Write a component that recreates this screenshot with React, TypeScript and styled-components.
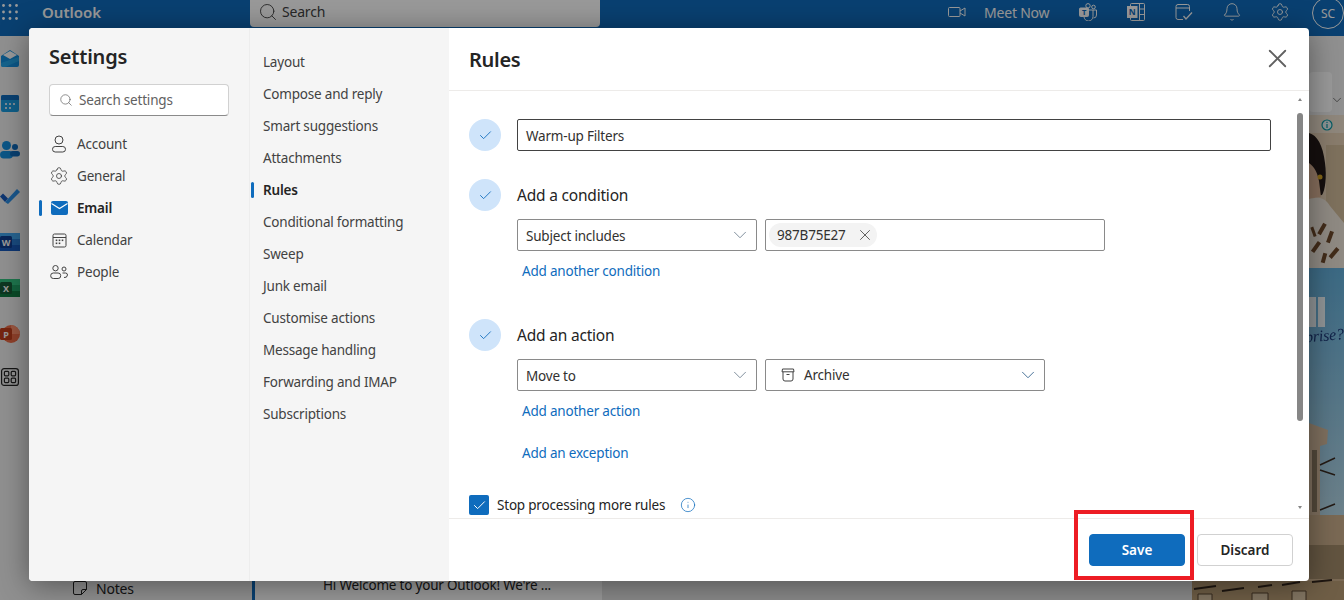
import React from 'react'
import styled, { createGlobalStyle } from 'styled-components'
import { Bell, Check, ChevronDown, Info, Search, Settings as Gear, X } from 'lucide-react'

const FONT = `'Noto Sans', 'Open Sans', Arial, sans-serif`

const GlobalStyle = createGlobalStyle`
  html, body {
    margin: 0;
    height: 100%;
    overflow: hidden;
  }
  body {
    font-family: ${FONT};
    font-size: 13.5px;
    letter-spacing: -0.2px;
    color: #242424;
  }
  * {
    box-sizing: border-box;
  }
`

const Page = styled.div`
  position: relative;
  width: 1344px;
  height: 600px;
  overflow: hidden;
  display: flex;
  flex-direction: column;
  background: #f0f0f0;
`

const TopBar = styled.header`
  height: 36px;
  flex: none;
  display: flex;
  align-items: flex-start;
  background: #0f6cbd;
  color: #fff;
`

const Waffle = styled.div`
  width: 42px;
  height: 24px;
  padding-left: 2px;
  display: flex;
  align-items: center;
`

const Brand = styled.div`
  width: 208px;
  height: 24px;
  line-height: 24px;
  font-size: 15px;
  font-weight: 600;
  letter-spacing: 0;
`

const TopSearch = styled.div`
  width: 350px;
  height: 27px;
  padding: 0 0 3px 8px;
  display: flex;
  align-items: center;
  gap: 4px;
  background: #fff;
  border-radius: 0 0 4px 4px;
  color: #424242;
  font-size: 14px;
  line-height: 24px;
`

const TopActions = styled.div`
  margin-left: auto;
  display: flex;
  align-items: flex-start;
`

const MeetNow = styled.div`
  width: 116px;
  height: 24px;
  display: flex;
  align-items: center;
  gap: 18px;
  font-size: 14px;
`

const TopIcon = styled.div`
  width: 48px;
  height: 24px;
  display: flex;
  align-items: center;
  justify-content: center;
`

const Avatar = styled.div`
  width: 32px;
  height: 32px;
  margin: -3px 0 0 8px;
  border: 1px solid #fff;
  border-radius: 50%;
  display: flex;
  align-items: center;
  justify-content: center;
  font-size: 12px;
`

const Workspace = styled.div`
  flex: 1;
  min-height: 0;
  display: flex;
`

const Rail = styled.nav`
  width: 48px;
  flex: none;
  padding-top: 10px;
  display: flex;
  flex-direction: column;
  gap: 22px;
`

const RailIcon = styled.div`
  width: 24px;
  height: 24px;
  display: flex;
  align-items: center;
  justify-content: center;
  margin-left: -2px;
  &:last-child {
    margin-top: -3px;
  }
`

const FolderPane = styled.div`
  width: 204px;
  flex: none;
  padding: 0 0 1px 25px;
  display: flex;
  flex-direction: column;
  justify-content: flex-end;
`

const NotesRow = styled.div`
  height: 22px;
  display: flex;
  align-items: center;
  gap: 9px;
  font-size: 14px;
`

const MailList = styled.div`
  width: 350px;
  flex: none;
  background: #fff;
  border-left: 3px solid #0f6cbd;
  padding: 0 0 5px 68px;
  display: flex;
  flex-direction: column;
  justify-content: flex-end;
  font-size: 13.5px;
  line-height: 20px;
  white-space: nowrap;
`

const ReadingPane = styled.div`
  width: 590px;
  flex: none;
  background: #e6e6e6;
`

const AdColumn = styled.aside`
  flex: 1;
  display: flex;
  flex-direction: column;
  overflow: hidden;
`

const AdHead = styled.div`
  height: 79px;
  flex: none;
  padding: 36px 12px 0 117px;
  position: relative;
`

const AdCard = styled.div`
  height: 40px;
  background: #fff;
  border-radius: 4px;
`

const AdChevron = styled.div`
  position: absolute;
  right: 0;
  top: 57px;
`

const AdPicture = styled.svg`
  display: block;
  flex: none;
  filter: blur(0.7px);
`

const Scrim = styled.div`
  position: absolute;
  inset: 0;
  background: rgba(0, 0, 0, 0.4);
`

const Modal = styled.section`
  position: absolute;
  left: 29px;
  top: 28px;
  width: 1280px;
  height: 553px;
  display: flex;
  background: #fff;
  border-radius: 4px;
  overflow: hidden;
`

const ModalShadow = styled.div`
  position: absolute;
  left: 29px;
  top: 28px;
  width: 1280px;
  height: 553px;
  border-radius: 4px;
  box-shadow: 0 4px 30px rgba(0, 0, 0, 0.42);
`

const SettingsColumn = styled.div`
  width: 220px;
  flex: none;
  background: #f5f5f5;
  padding: 15px 20px 0 20px;
`

const SettingsTitle = styled.h1`
  margin: 0 0 14px;
  font-size: 20px;
  line-height: 27px;
  font-weight: 600;
  color: #242424;
`

const SearchBox = styled.div`
  height: 32px;
  padding-left: 9px;
  display: flex;
  align-items: center;
  gap: 6px;
  background: #fff;
  border: 1px solid #d1d1d1;
  border-bottom-color: #8a8a8a;
  border-radius: 4px;
  color: #616161;
  margin-bottom: 12px;
`

const NavRow = styled.div<{ $active?: boolean }>`
  position: relative;
  height: 32px;
  display: flex;
  align-items: center;
  gap: 8px;
  color: ${(p) => (p.$active ? '#242424' : '#424242')};
  font-weight: ${(p) => (p.$active ? 600 : 400)};
  &::before {
    content: ${(p) => (p.$active ? "''" : 'none')};
    position: absolute;
    left: -10px;
    top: 8px;
    width: 3px;
    height: 16px;
    background: #0f6cbd;
    border-radius: 2px;
  }
`

const NavIcon = styled.div`
  width: 20px;
  height: 20px;
  display: flex;
  align-items: center;
  justify-content: center;
`

const SubColumn = styled.div`
  width: 200px;
  flex: none;
  background: #f5f5f5;
  border-left: 1px solid #ededed;
  padding: 18px 0 0 13px;
`

const SubRow = styled.div<{ $active?: boolean }>`
  position: relative;
  height: 32px;
  line-height: 32px;
  color: ${(p) => (p.$active ? '#242424' : '#424242')};
  font-weight: ${(p) => (p.$active ? 600 : 400)};
  &::before {
    content: ${(p) => (p.$active ? "''" : 'none')};
    position: absolute;
    left: -12px;
    top: 8px;
    width: 3px;
    height: 16px;
    background: #0f6cbd;
    border-radius: 2px;
  }
`

const RulesPane = styled.div`
  flex: 1;
  min-width: 0;
  display: flex;
  flex-direction: column;
`

const RulesHeader = styled.div`
  height: 63px;
  flex: none;
  padding: 0 20px;
  display: flex;
  align-items: center;
  justify-content: space-between;
  border-bottom: 1px solid #edebe9;
`

const RulesTitle = styled.h2`
  margin: 0;
  font-size: 20px;
  font-weight: 600;
  letter-spacing: -0.3px;
  color: #242424;
`

const CloseButton = styled.button`
  padding: 0;
  margin: -1px -6px 0 0;
  width: 36px;
  height: 36px;
  border: 0;
  background: none;
  color: #616161;
  display: flex;
  align-items: center;
  justify-content: center;
`

const ScrollArea = styled.div`
  flex: 1;
  min-height: 0;
  display: flex;
`

const RuleForm = styled.div`
  flex: 1;
  min-width: 0;
  padding: 28px 22px 0 20px;
  overflow: hidden;
`

const Scrollbar = styled.div`
  width: 14px;
  margin-right: 2px;
  flex: none;
  padding-top: 7px;
  display: flex;
  flex-direction: column;
  align-items: center;
`

const ArrowUp = styled.div`
  width: 0;
  height: 0;
  border-left: 2.5px solid transparent;
  border-right: 2.5px solid transparent;
  border-bottom: 3px solid #868686;
`

const ArrowDown = styled.div`
  width: 0;
  height: 0;
  margin-top: 85px;
  border-left: 2.5px solid transparent;
  border-right: 2.5px solid transparent;
  border-top: 3px solid #868686;
`

const Thumb = styled.div`
  width: 6px;
  height: 308px;
  margin-top: 12px;
  background: #868686;
  border-radius: 3px;
`

const StepRow = styled.div<{ $top?: number }>`
  display: grid;
  grid-template-columns: 32px 1fr;
  column-gap: 16px;
  margin-top: ${(p) => p.$top ?? 0}px;
`

const StepBadge = styled.div`
  width: 32px;
  height: 32px;
  border-radius: 50%;
  background: #cfe4fa;
  color: #0f6cbd;
  display: flex;
  align-items: center;
  justify-content: center;
`

const StepTitle = styled.div`
  height: 32px;
  line-height: 32px;
  font-size: 15.5px;
  color: #242424;
`

const NameInput = styled.div`
  height: 32px;
  padding: 2px 0 0 8px;
  display: flex;
  align-items: center;
  border: 1px solid #424242;
  border-radius: 2px;
  color: #323130;
`

const FieldRow = styled.div`
  margin: 8px 0 0 48px;
  display: flex;
  gap: 8px;
`

const Field = styled.div<{ $width: number }>`
  width: ${(p) => p.$width}px;
  height: 32px;
  padding: 2px 8px 0;
  display: flex;
  align-items: center;
  border: 1px solid #8a8a8a;
  border-radius: 2px;
  color: #323130;
`

const FieldChevron = styled.div<{ $dark?: boolean }>`
  margin: -2px -3px 0 auto;
  display: flex;
  color: ${(p) => (p.$dark ? '#2f5f8a' : '#6f7f8f')};
`

const Chip = styled.div`
  height: 24px;
  width: 108px;
  margin: -2px 0 0 -5px;
  padding: 0 3px 0 8px;
  display: flex;
  align-items: center;
  justify-content: space-between;
  background: #f3f3f3;
  border-radius: 12px;
`

const ArchiveSlot = styled.div`
  margin: -2px 0 0 7px;
  display: flex;
`

const ArchiveLabel = styled.div`
  margin: -2px 0 0 9px;
`

const ActionLink = styled.a<{ $top: number }>`
  display: block;
  margin: ${(p) => p.$top}px 0 0 53px;
  height: 20px;
  line-height: 20px;
  color: #0f6cbd;
`

const CheckRow = styled.div`
  margin-top: 32px;
  height: 20px;
  display: flex;
  align-items: center;
  gap: 8px;
`

const CheckBox = styled.div`
  width: 20px;
  height: 20px;
  background: #0f6cbd;
  border-radius: 2px;
  color: #fff;
  display: flex;
  align-items: center;
  justify-content: center;
`

const InfoMark = styled.div`
  margin-left: 7px;
  display: flex;
  color: #0f6cbd;
`

const Footer = styled.div`
  height: 63px;
  flex: none;
  padding: 15px 16px 0 0;
  display: flex;
  justify-content: flex-end;
  gap: 12px;
  border-top: 1px solid #edebe9;
`

const FooterButton = styled.button<{ $primary?: boolean }>`
  width: 96px;
  height: 32px;
  padding: 0;
  font-family: ${FONT};
  font-size: 13.5px;
  font-weight: 600;
  border-radius: 4px;
  border: 1px solid ${(p) => (p.$primary ? '#0f6cbd' : '#d1d1d1')};
  background: ${(p) => (p.$primary ? '#0f6cbd' : '#fff')};
  color: ${(p) => (p.$primary ? '#fff' : '#242424')};
`

const Callout = styled.div`
  position: absolute;
  left: 1074px;
  top: 510px;
  width: 120px;
  height: 70px;
  border: 4px solid #ed1c24;
`

const WaffleIcon = () => (
  <svg width="16" height="16" viewBox="0 0 16 16" fill="#fff">
    {[1.5, 8, 14.5].map((y) =>
      [1.5, 8, 14.5].map((x) => <circle key={`${x}${y}`} cx={x} cy={y} r="1.4" />)
    )}
  </svg>
)

const VideoIcon = () => (
  <svg width="18" height="12" viewBox="0 0 18 12" fill="none" stroke="#fff" strokeWidth="1">
    <rect x="0.5" y="1.5" width="11.5" height="9" rx="1" />
    <path d="M12 5l5-3v8l-5-3" />
  </svg>
)

const TeamsIcon = () => (
  <svg width="18" height="18" viewBox="0 0 18 18" fill="none" stroke="#fff" strokeWidth="1">
    <rect x="0.5" y="5" width="9" height="8.5" rx="1" fill="#fff" />
    <circle cx="9" cy="2.8" r="2.2" />
    <circle cx="14.5" cy="4" r="1.8" />
    <path d="M9.5 7h8v5a3 3 0 0 1-3 3M5 13.5a4.5 4.5 0 0 0 9 0V7" />
    <text x="5" y="12" fontSize="7.5" fontWeight="700" fill="#0f6cbd" stroke="none" textAnchor="middle">
      T
    </text>
  </svg>
)

const OneNoteIcon = () => (
  <svg width="18" height="18" viewBox="0 0 18 18" fill="none" stroke="#fff" strokeWidth="1">
    <rect x="3.5" y="0.5" width="14" height="17" rx="1" />
    <path d="M12.5 0.5v17M12.5 6h5M12.5 11.5h5" />
    <rect x="0.5" y="3.5" width="9.5" height="11" fill="#fff" />
    <text x="5.2" y="12.4" fontSize="8.5" fontWeight="700" fill="#0f6cbd" stroke="none" textAnchor="middle">
      N
    </text>
  </svg>
)

const TodoIcon = () => (
  <svg width="18" height="18" viewBox="0 0 18 18" fill="none" stroke="#fff" strokeWidth="1">
    <path d="M8 16.5H3a2 2 0 0 1-2-2v-11a2 2 0 0 1 2-2h9.5a2 2 0 0 1 2 2V8M1 5h13.5" />
    <path d="M8.5 13l2.5 3 6-6.5" strokeWidth="1.3" />
  </svg>
)

const AccountIcon = () => (
  <svg width="16" height="18" viewBox="0 0 16 18" fill="none" stroke="#424242" strokeWidth="1">
    <circle cx="8" cy="5" r="4" />
    <rect x="1.5" y="11.5" width="13" height="5.5" rx="2.7" />
  </svg>
)

const MailIcon = () => (
  <svg width="17" height="14" viewBox="0 0 17 14">
    <rect width="17" height="14" rx="2" fill="#0f6cbd" />
    <path d="M0.5 2.5l8 5 8-5" fill="none" stroke="#fff" strokeWidth="1.1" />
  </svg>
)

const CalendarIcon = () => (
  <svg width="15" height="15" viewBox="0 0 15 15" fill="none" stroke="#424242" strokeWidth="1">
    <rect x="1" y="1" width="13" height="13" rx="1.5" />
    <path d="M1 4.5h13" />
    <g fill="#424242" stroke="none">
      <rect x="3.7" y="6.5" width="1.6" height="1.6" />
      <rect x="6.7" y="6.5" width="1.6" height="1.6" />
      <rect x="9.7" y="6.5" width="1.6" height="1.6" />
      <rect x="3.7" y="9.5" width="1.6" height="1.6" />
      <rect x="6.7" y="9.5" width="1.6" height="1.6" />
    </g>
  </svg>
)

const PeopleIcon = () => (
  <svg width="18" height="14" viewBox="0 0 18 14" fill="none" stroke="#424242" strokeWidth="1">
    <circle cx="5.5" cy="3.2" r="2.7" />
    <circle cx="14" cy="4" r="2" />
    <rect x="0.7" y="8" width="10" height="5.5" rx="2.6" />
    <path d="M12.5 8h3a2 2 0 0 1 2 2v0a3 3 0 0 1-3.5 2.5" />
  </svg>
)

const ArchiveIcon = () => (
  <svg width="14" height="14" viewBox="0 0 14 14" fill="none" stroke="#424242" strokeWidth="1">
    <path d="M1.5 1h11l.5 2.8H1zM2 3.8V11a2 2 0 0 0 2 2h6a2 2 0 0 0 2-2V3.8M5.5 6.5h3" />
  </svg>
)

const NotesIcon = () => (
  <svg width="14" height="14" viewBox="0 0 14 14" fill="none" stroke="#242424" strokeWidth="1">
    <path d="M2 .5h10a1.5 1.5 0 0 1 1.5 1.5v6.5l-5 5H2A1.5 1.5 0 0 1 .5 12V2A1.5 1.5 0 0 1 2 .5zM8.5 13.5V10a1.5 1.5 0 0 1 1.5-1.5h3.5" />
  </svg>
)

const railIcons = [
  <svg key="mail" width="20" height="18" viewBox="0 0 20 18">
    <path d="M1 7l9-6 9 6v9a2 2 0 0 1-2 2H3a2 2 0 0 1-2-2z" fill="#1490df" />
    <path d="M3 6l7-4 7 4-7 4z" fill="#fff" />
    <path d="M1 14l18-6v4l-14 6H3a2 2 0 0 1-2-2z" fill="#28a8ea" opacity=".9" />
  </svg>,
  <svg key="cal" width="18" height="18" viewBox="0 0 18 18">
    <rect width="18" height="17" rx="2" fill="#1b9de2" />
    <path d="M0 2a2 2 0 0 1 2-2h14a2 2 0 0 1 2 2v3H0z" fill="#0f6cbd" />
    <g fill="#cde6f7">
      <rect x="4" y="8" width="2" height="2" />
      <rect x="8" y="8" width="2" height="2" />
      <rect x="12" y="8" width="2" height="2" />
      <rect x="4" y="12" width="2" height="2" />
      <rect x="8" y="12" width="2" height="2" />
    </g>
  </svg>,
  <svg key="people" width="20" height="18" viewBox="0 0 20 18">
    <circle cx="6.5" cy="4.5" r="4.5" fill="#1490df" />
    <circle cx="15" cy="6" r="3" fill="#0f6cbd" />
    <rect x="0" y="10" width="13" height="7.5" rx="3.7" fill="#1490df" />
    <rect x="10" y="10" width="10" height="5.5" rx="2.7" fill="#0f6cbd" />
  </svg>,
  <svg key="todo" width="20" height="16" viewBox="0 0 20 16">
    <path d="M0 8.5L3 5.5l5 5-3 3.5z" fill="#185abd" />
    <path d="M5 14L17 1l3 3L8 16z" fill="#2b8fe8" />
  </svg>,
  <svg key="word" width="20" height="18" viewBox="0 0 20 18">
    <rect width="20" height="6" fill="#41a5ee" />
    <rect y="6" width="20" height="6" fill="#2b7cd3" />
    <rect y="12" width="20" height="6" fill="#185abd" />
    <rect y="3" width="12" height="12" rx="1.5" fill="#103f91" />
    <text x="6" y="12.5" fontSize="9" fontWeight="700" fill="#fff" textAnchor="middle">
      W
    </text>
  </svg>,
  <svg key="excel" width="20" height="18" viewBox="0 0 20 18">
    <rect width="20" height="6" fill="#33c481" />
    <rect y="6" width="20" height="6" fill="#21a366" />
    <rect y="12" width="20" height="6" fill="#107c41" />
    <rect y="3" width="12" height="12" rx="1.5" fill="#185c37" />
    <text x="6" y="12.5" fontSize="9" fontWeight="700" fill="#fff" textAnchor="middle">
      X
    </text>
  </svg>,
  <svg key="ppt" width="20" height="18" viewBox="0 0 20 18">
    <circle cx="11" cy="9" r="9" fill="#ed6c47" />
    <path d="M11 0a9 9 0 0 1 9 9h-9z" fill="#ff8f6b" />
    <rect y="3" width="12" height="12" rx="1.5" fill="#c43e1c" />
    <text x="6" y="12.5" fontSize="9" fontWeight="700" fill="#fff" textAnchor="middle">
      P
    </text>
  </svg>,
  <svg key="apps" width="18" height="18" viewBox="0 0 18 18" fill="none" stroke="#242424" strokeWidth="1.2">
    <rect x=".6" y=".6" width="16.8" height="16.8" rx="2.5" />
    <rect x="3.4" y="3.4" width="4.4" height="4.4" rx="1" />
    <rect x="10.2" y="3.4" width="4.4" height="4.4" rx="1" />
    <rect x="3.4" y="10.2" width="4.4" height="4.4" rx="1" />
    <rect x="10.2" y="10.2" width="4.4" height="4.4" rx="1" />
  </svg>
]

// the advert in the right column, only its edges show around the dialog
const AdArt = () => (
  <AdPicture width="152" height="485" viewBox="0 0 152 485">
    <defs>
      <linearGradient id="sky" x1="0" y1="0" x2="0" y2="1">
        <stop offset="0" stopColor="#64b0dc" />
        <stop offset="0.85" stopColor="#c0dce8" />
      </linearGradient>
    </defs>
    <rect width="152" height="153" fill="#e4cfb4" />
    <rect x="134" y="30" width="18" height="90" fill="#d3bd9c" />
    <rect x="117" y="0" width="35" height="18" fill="#efe2cf" />
    <path d="M117 18c8 2 14 12 16 30 2 14 0 28-3 32l-13 2z" fill="#231a18" />
    <path d="M117 48c5 4 8 8 10 18l2 16-12 2z" fill="#e0b899" />
    <circle cx="128" cy="62" r="2.5" fill="#d9a826" />
    <path d="M117 84c8-2 15-3 21 7l14 17v45h-35z" fill="#efe6da" />
    <g fill="#6e4a2c">
      <rect x="128" y="108" width="4" height="12" transform="rotate(30 130 114)" />
      <rect x="136" y="116" width="4" height="12" transform="rotate(20 138 122)" />
      <rect x="122" y="126" width="4" height="12" transform="rotate(35 124 132)" />
      <rect x="140" y="132" width="4" height="12" transform="rotate(40 142 138)" />
      <rect x="130" y="138" width="4" height="10" transform="rotate(15 132 143)" />
      <rect x="120" y="112" width="3" height="10" transform="rotate(-20 121 117)" />
    </g>
    <rect y="153" width="152" height="332" fill="url(#sky)" />
    <rect x="117" y="182" width="7" height="30" fill="#fff" opacity=".9" />
    <rect x="126" y="182" width="7" height="30" fill="#fff" opacity=".9" />
    <text
      x="152"
      y="226"
      textAnchor="end"
      fontFamily="'Liberation Serif', serif"
      fontStyle="italic"
      fontSize="16"
      fill="#1d3a7a"
      transform="rotate(-5 130 222)"
    >
      prise?
    </text>
    <path d="M117 308l19 7-1 14-7 2v74h-11z" fill="#d4bb9f" />
    <rect x="120" y="335" width="5" height="62" fill="#8b7a63" />
    <path d="M128 350l15-7M128 355l15 5M128 395l15-6" stroke="#3b2c22" strokeWidth="1.5" />
    <path d="M128 400h24v85H0v-25l117-10v-50h11z" fill="#cbb08d" />
    <rect x="117" y="430" width="35" height="34" fill="#a48d6c" />
    <rect x="0" y="466" width="152" height="19" fill="#b99d76" />
    <path d="M2 474l22-3M30 476l22-3M66 472l14-2M90 470l18-3M120 467l20-2" stroke="#33261c" strokeWidth="2" />
    <path d="M6 485v-6h14v6M60 485v-7h16v7M100 485v-9h14v9" fill="#d9c4a3" stroke="#5a4632" strokeWidth="1" />
    <g transform="translate(135 10)">
      <circle r="5" fill="#eaf3f4" stroke="#0a9aa8" strokeWidth="1.2" />
      <rect x="-0.6" y="-1" width="1.2" height="4" fill="#0a9aa8" />
      <rect x="-0.6" y="-3.2" width="1.2" height="1.2" fill="#0a9aa8" />
    </g>
  </AdPicture>
)

const leftNav = [
  { label: 'Account', icon: <AccountIcon /> },
  { label: 'General', icon: <Gear size={20} strokeWidth={1} color="#424242" /> },
  { label: 'Email', icon: <MailIcon />, active: true },
  { label: 'Calendar', icon: <CalendarIcon /> },
  { label: 'People', icon: <PeopleIcon /> }
]

const subNav = [
  'Layout',
  'Compose and reply',
  'Smart suggestions',
  'Attachments',
  'Rules',
  'Conditional formatting',
  'Sweep',
  'Junk email',
  'Customise actions',
  'Message handling',
  'Forwarding and IMAP',
  'Subscriptions'
]

const Step = () => (
  <StepBadge>
    <Check size={15} strokeWidth={1.4} />
  </StepBadge>
)

export default function App() {
  return (
    <Page>
      <GlobalStyle />
      <TopBar>
        <Waffle>
          <WaffleIcon />
        </Waffle>
        <Brand>Outlook</Brand>
        <TopSearch>
          <Search size={20} strokeWidth={1.1} />
          Search
        </TopSearch>
        <TopActions>
          <MeetNow>
            <VideoIcon />
            Meet Now
          </MeetNow>
          <TopIcon>
            <TeamsIcon />
          </TopIcon>
          <TopIcon>
            <OneNoteIcon />
          </TopIcon>
          <TopIcon>
            <TodoIcon />
          </TopIcon>
          <TopIcon>
            <Bell size={20} strokeWidth={1.1} />
          </TopIcon>
          <TopIcon>
            <Gear size={20} strokeWidth={1.1} />
          </TopIcon>
          <Avatar>SC</Avatar>
        </TopActions>
      </TopBar>
      <Workspace>
        <Rail>
          {railIcons.map((icon) => (
            <RailIcon key={icon.key}>{icon}</RailIcon>
          ))}
        </Rail>
        <FolderPane>
          <NotesRow>
            <NotesIcon />
            Notes
          </NotesRow>
        </FolderPane>
        <MailList>Hi Welcome to your Outlook! We're ...</MailList>
        <ReadingPane />
        <AdColumn>
          <AdHead>
            <AdCard />
            <AdChevron>
              <ChevronDown size={14} strokeWidth={1} />
            </AdChevron>
          </AdHead>
          <AdArt />
        </AdColumn>
      </Workspace>
      <Scrim />
      <ModalShadow />
      <Modal>
        <SettingsColumn>
          <SettingsTitle>Settings</SettingsTitle>
          <SearchBox>
            <Search size={14} strokeWidth={1.2} color="#616161" />
            Search settings
          </SearchBox>
          {leftNav.map((item) => (
            <NavRow key={item.label} $active={item.active}>
              <NavIcon>{item.icon}</NavIcon>
              {item.label}
            </NavRow>
          ))}
        </SettingsColumn>
        <SubColumn>
          {subNav.map((label) => (
            <SubRow key={label} $active={label === 'Rules'}>
              {label}
            </SubRow>
          ))}
        </SubColumn>
        <RulesPane>
          <RulesHeader>
            <RulesTitle>Rules</RulesTitle>
            <CloseButton aria-label="Close">
              <X size={31} strokeWidth={1.4} />
            </CloseButton>
          </RulesHeader>
          <ScrollArea>
            <RuleForm>
              <StepRow>
                <Step />
                <NameInput>Warm-up Filters</NameInput>
              </StepRow>
              <StepRow $top={28}>
                <Step />
                <StepTitle>Add a condition</StepTitle>
              </StepRow>
              <FieldRow>
                <Field $width={240}>
                  Subject includes
                  <FieldChevron>
                    <ChevronDown size={22} strokeWidth={0.95} />
                  </FieldChevron>
                </Field>
                <Field $width={340}>
                  <Chip>
                    987B75E27
                    <X size={18} strokeWidth={1} />
                  </Chip>
                </Field>
              </FieldRow>
              <ActionLink $top={10}>Add another condition</ActionLink>
              <StepRow $top={38}>
                <Step />
                <StepTitle>Add an action</StepTitle>
              </StepRow>
              <FieldRow>
                <Field $width={240}>
                  Move to
                  <FieldChevron>
                    <ChevronDown size={22} strokeWidth={0.95} />
                  </FieldChevron>
                </Field>
                <Field $width={280}>
                  <ArchiveSlot>
                    <ArchiveIcon />
                  </ArchiveSlot>
                  <ArchiveLabel>Archive</ArchiveLabel>
                  <FieldChevron $dark>
                    <ChevronDown size={22} strokeWidth={0.95} />
                  </FieldChevron>
                </Field>
              </FieldRow>
              <ActionLink $top={10}>Add another action</ActionLink>
              <ActionLink $top={22}>Add an exception</ActionLink>
              <CheckRow>
                <CheckBox>
                  <Check size={15} strokeWidth={1.6} />
                </CheckBox>
                Stop processing more rules
                <InfoMark>
                  <Info size={16} strokeWidth={1.1} />
                </InfoMark>
              </CheckRow>
            </RuleForm>
            <Scrollbar>
              <ArrowUp />
              <Thumb />
              <ArrowDown />
            </Scrollbar>
          </ScrollArea>
          <Footer>
            <FooterButton $primary>Save</FooterButton>
            <FooterButton>Discard</FooterButton>
          </Footer>
        </RulesPane>
      </Modal>
      <Callout />
    </Page>
  )
}
